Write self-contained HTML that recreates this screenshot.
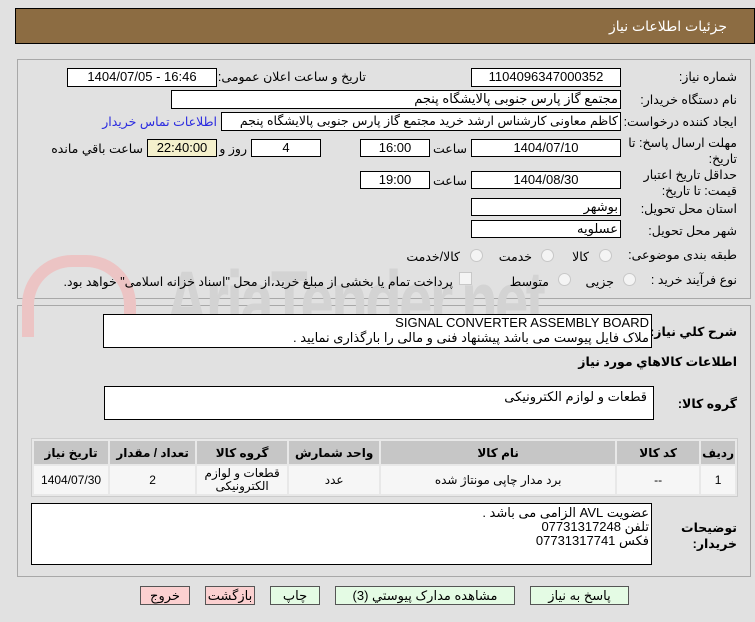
<!DOCTYPE html>
<html><head><meta charset="utf-8"><style>
body{margin:0;width:755px;height:622px;background:#e1e1e1;font-family:"Liberation Sans","DejaVu Sans",sans-serif;font-size:12px;color:#000;position:relative;overflow:hidden}
.a{position:absolute}
.box{position:absolute;background:#fff;border:1px solid #000;box-sizing:border-box;font-size:13px;line-height:16px;text-align:center}
.r{text-align:right;padding-right:2px;direction:rtl}
.l{position:absolute;direction:rtl;text-align:right;white-space:nowrap;font-size:12.5px}
.panel{position:absolute;border:1px solid #a8a8a8;box-sizing:border-box}
.rad{position:absolute;width:11px;height:11px;border-radius:50%;border:1px solid #c8c8c8;background:#f4f4f4}
.btn{position:absolute;height:19px;border:1px solid #555;box-sizing:border-box;text-align:center;font-size:13px;line-height:17px;direction:rtl}
table{border-collapse:separate;border-spacing:2px;position:absolute;left:31px;top:438px;width:707px;background:#e8e8e8;border:1px solid #ccc}
th{background:#c6c6c6;font-weight:bold;height:21px;font-size:12px}
td{background:#f6f6f6;height:26px;text-align:center;font-size:12px;line-height:13px}
</style></head><body>
<div class="a" style="left:15px;top:8px;width:740px;height:36px;background:#8c6c42;border:1px solid #000;box-sizing:border-box"></div>
<div class="l" style="right:28px;top:18px;color:#fff;font-size:14px">جزئیات اطلاعات نیاز</div>

<div class="panel" style="left:17px;top:59px;width:734px;height:240px"></div>
<div class="panel" style="left:17px;top:305px;width:734px;height:272px"></div>

<div class="a" style="left:22px;top:255px;width:90px;height:70px;border:12px solid #ecc4c4;border-bottom:none;border-radius:50px 50px 0 0"></div>
<div class="a" style="left:165px;top:252px;font-size:86px;font-weight:bold;color:#d3d3d3;letter-spacing:-4px;transform:scaleX(.7);transform-origin:left;line-height:100px">AriaTender.net</div>

<div class="l" style="right:18px;top:69px">شماره نیاز:</div>
<div class="box" style="left:471px;top:68px;width:150px;height:19px">1104096347000352</div>
<div class="l" style="right:389px;top:69px">تاریخ و ساعت اعلان عمومی:</div>
<div class="box" style="left:67px;top:68px;width:150px;height:19px">1404/07/05 - 16:46</div>

<div class="l" style="right:18px;top:92px">نام دستگاه خریدار:</div>
<div class="box r" style="left:171px;top:90px;width:450px;height:19px">مجتمع گاز پارس جنوبی  پالایشگاه پنجم</div>

<div class="l" style="right:18px;top:114px">ایجاد کننده درخواست:</div>
<div class="box r" style="left:221px;top:112px;width:400px;height:19px;font-size:12.5px">کاظم معاونی کارشناس ارشد خرید مجتمع گاز پارس جنوبی  پالایشگاه پنجم</div>
<div class="l" style="right:538px;top:114px;color:#2a2ae0">اطلاعات تماس خریدار</div>

<div class="l" style="right:18px;top:135px;line-height:16px">مهلت ارسال پاسخ: تا<br>تاریخ:</div>
<div class="box" style="left:471px;top:139px;width:150px;height:18px">1404/07/10</div>
<div class="l" style="right:288px;top:141px">ساعت</div>
<div class="box" style="left:360px;top:139px;width:70px;height:18px">16:00</div>
<div class="box" style="left:251px;top:139px;width:70px;height:18px">4</div>
<div class="l" style="right:508px;top:141px">روز و</div>
<div class="box" style="left:147px;top:139px;width:70px;height:18px;background:#f4f0cc">22:40:00</div>
<div class="l" style="right:612px;top:141px">ساعت باقي مانده</div>

<div class="l" style="right:18px;top:167px;line-height:16px">حداقل تاریخ اعتبار<br>قیمت: تا تاریخ:</div>
<div class="box" style="left:471px;top:171px;width:150px;height:18px">1404/08/30</div>
<div class="l" style="right:288px;top:173px">ساعت</div>
<div class="box" style="left:360px;top:171px;width:70px;height:18px">19:00</div>

<div class="l" style="right:18px;top:201px">استان محل تحویل:</div>
<div class="box r" style="left:471px;top:198px;width:150px;height:18px">بوشهر</div>
<div class="l" style="right:18px;top:223px">شهر محل تحویل:</div>
<div class="box r" style="left:471px;top:220px;width:150px;height:18px">عسلویه</div>

<div class="l" style="right:18px;top:247px">طبقه بندی موضوعی:</div>
<div class="rad" style="left:599px;top:249px"></div><div class="l" style="right:166px;top:249px">کالا</div>
<div class="rad" style="left:541px;top:249px"></div><div class="l" style="right:223px;top:249px">خدمت</div>
<div class="rad" style="left:470px;top:249px"></div><div class="l" style="right:295px;top:249px">کالا/خدمت</div>

<div class="l" style="right:18px;top:272px">نوع فرآیند خرید :</div>
<div class="rad" style="left:623px;top:273px"></div><div class="l" style="right:141px;top:274px">جزیی</div>
<div class="rad" style="left:558px;top:273px"></div><div class="l" style="right:206px;top:274px">متوسط</div>
<div class="a" style="left:459px;top:272px;width:11px;height:11px;border:1px solid #c8c8c8;background:#f4f4f4"></div>
<div class="l" style="right:302px;top:274px">پرداخت تمام یا بخشی از مبلغ خرید،از محل "اسناد خزانه اسلامی" خواهد بود.</div>

<div class="l" style="right:18px;top:324px;font-weight:bold">شرح کلي نیاز:</div>
<div class="box r" style="left:103px;top:314px;width:549px;height:34px;line-height:15px">SIGNAL CONVERTER ASSEMBLY BOARD<br>ملاک فایل پیوست می باشد پیشنهاد فنی و مالی را بارگذاری نمایید .</div>
<div class="l" style="right:18px;top:354px;font-weight:bold">اطلاعات کالاهاي مورد نیاز</div>
<div class="l" style="right:18px;top:396px;font-weight:bold">گروه کالا:</div>
<div class="box r" style="left:104px;top:386px;width:550px;height:34px;text-align:right;padding-right:6px;padding-top:2px">قطعات و لوازم الکترونیکی</div>

<table dir="rtl"><tr><th style="width:27px">ردیف</th><th style="width:80px">کد کالا</th><th style="width:232px">نام کالا</th><th style="width:88px">واحد شمارش</th><th style="width:88px">گروه کالا</th><th style="width:83px">تعداد / مقدار</th><th>تاریخ نیاز</th></tr>
<tr><td>1</td><td>--</td><td>برد مدار چاپی مونتاژ شده</td><td>عدد</td><td>قطعات و لوازم<br>الکترونیکی</td><td>2</td><td>1404/07/30</td></tr></table>

<div class="l" style="right:18px;top:520px;font-weight:bold;line-height:16px">توضیحات<br>خریدار:</div>
<div class="box r" style="left:31px;top:503px;width:621px;height:62px;line-height:14px;padding-top:2px">عضویت AVL الزامی می باشد .<br>تلفن 07731317248<br>فکس 07731317741</div>

<div class="btn" style="left:140px;top:586px;width:50px;background:#fbd0d0">خروج</div>
<div class="btn" style="left:205px;top:586px;width:50px;background:#fbd0d0">بازگشت</div>
<div class="btn" style="left:270px;top:586px;width:50px;background:#e4fbe4">چاپ</div>
<div class="btn" style="left:335px;top:586px;width:180px;background:#e4fbe4">مشاهده مدارک پیوستي (3)</div>
<div class="btn" style="left:530px;top:586px;width:99px;background:#e4fbe4">پاسخ به نیاز</div>
</body></html>
